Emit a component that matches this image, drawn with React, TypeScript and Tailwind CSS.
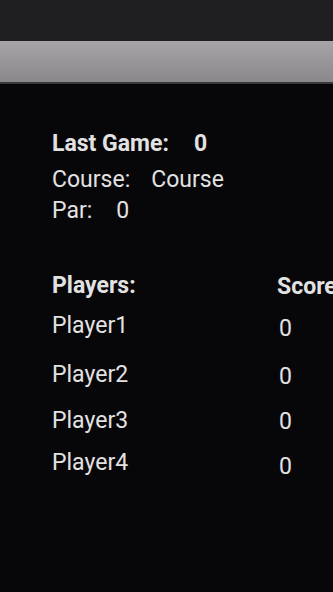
export default function App() {
  const players = [
    { name: "Player1", mt: "mt-[13px]", zt: "mt-[3px]" },
    { name: "Player2", mt: "mt-[20px]", zt: "mt-[2px]" },
    { name: "Player3", mt: "mt-[18px]", zt: "mt-[1px]" },
    { name: "Player4", mt: "mt-[15px]", zt: "mt-[4px]" },
  ];
  return (
    <div className="w-[333px] h-[592px] overflow-hidden bg-[#070609] font-['Roboto',sans-serif] text-[23px] leading-[26px] text-[#e2e2e2]">
      <div className="h-[41px] bg-[#1f1e21]" />
      <div className="h-[43px] border-b-2 border-[#38373a] bg-gradient-to-b from-[#a6a4a7] to-[#8a888b]" />
      <div className="pl-[52px] pt-[47px]">
        <div className="flex font-bold">
          <span>Last Game:</span>
          <span className="ml-[25px]">0</span>
        </div>
        <div className="flex mt-[10px]">
          <span>Course:</span>
          <span className="ml-[21px]">Course</span>
        </div>
        <div className="flex mt-[5px]">
          <span>Par:</span>
          <span className="ml-[24px]">0</span>
        </div>
        <div className="grid grid-cols-[225px_1fr] mt-[49px] font-bold">
          <span>Players:</span>
          <span className="mt-[1px] whitespace-nowrap">Score</span>
        </div>
        {players.map((p) => (
          <div key={p.name} className={`grid grid-cols-[225px_1fr] ${p.mt}`}>
            <span>{p.name}</span>
            <span className={`${p.zt} pl-[2px]`}>0</span>
          </div>
        ))}
      </div>
    </div>
  );
}
